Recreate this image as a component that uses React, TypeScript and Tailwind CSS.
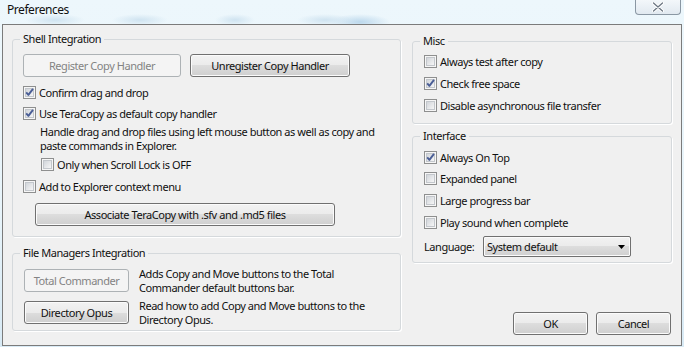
import React from "react";

function CheckIcon({ checked }: { checked?: boolean }) {
  return (
    <svg width="13" height="13" viewBox="0 0 13 13" className="shrink-0">
      <defs>
        <linearGradient id="cbin" x1="0" y1="0" x2="1" y2="1">
          <stop offset="0" stopColor="#cfd3d8" />
          <stop offset="1" stopColor="#f8f8f8" />
        </linearGradient>
      </defs>
      <rect x="0.5" y="0.5" width="12" height="12" fill="#f6f6f6" stroke="#8e8f8f" />
      <rect x="2.5" y="2.5" width="8" height="8" fill="url(#cbin)" stroke="#c3c7cc" />
      {checked && (
        <path
          d="M3.2 6.4 L5.4 8.9 L10 2.9"
          fill="none"
          stroke="#4a5e96"
          strokeWidth="1.9"
          strokeLinejoin="round"
        />
      )}
    </svg>
  );
}

function CheckRow({
  label,
  checked,
  className = "",
}: {
  label: string;
  checked?: boolean;
  className?: string;
}) {
  return (
    <div className={`flex h-[17px] items-center gap-[3px] ${className}`}>
      <CheckIcon checked={checked} />
      <span className="whitespace-nowrap">{label}</span>
    </div>
  );
}

function Btn({
  children,
  disabled,
  className = "",
}: {
  children: React.ReactNode;
  disabled?: boolean;
  className?: string;
}) {
  return (
    <div
      className={`flex h-[23px] shrink-0 items-center justify-center whitespace-nowrap rounded-[3px] border ${
        disabled
          ? "border-[#adb2b5] bg-[#f4f4f4] text-[#838383]"
          : "border-[#707070] bg-[linear-gradient(to_bottom,#f2f2f2_0%,#ebebeb_50%,#dddddd_50%,#cfcfcf_100%)] shadow-[inset_0_0_0_1px_#fbfbfb]"
      } ${className}`}
    >
      {children}
    </div>
  );
}

function Group({
  title,
  className = "",
  children,
}: {
  title: string;
  className?: string;
  children: React.ReactNode;
}) {
  return (
    <fieldset
      className={`flex flex-col rounded-[3px] border border-[#d5d9dc] shadow-[1px_1px_0_#ffffff] ${className}`}
    >
      <legend className="ml-[7px] px-[3px] leading-[14px]">{title}</legend>
      {children}
    </fieldset>
  );
}

export default function App() {
  return (
    <div className="h-[347px] w-[684px] overflow-hidden bg-[radial-gradient(ellipse_30px_6px_at_55px_20px,#cfe3f0,transparent),radial-gradient(ellipse_28px_6px_at_140px_20px,#cfe3f0,transparent),radial-gradient(ellipse_20px_6px_at_235px_20px,#cfe3f0,transparent),radial-gradient(ellipse_28px_6px_at_325px_20px,#cfe3f0,transparent),radial-gradient(ellipse_30px_8px_at_360px_22px,#bcd8ec,transparent),linear-gradient(to_bottom,#edf7fc,#e8f4fa_60%,#d8eaf5)] font-['Noto_Sans',sans-serif] text-[11px] leading-[14px] tracking-[-0.45px] text-[#111]">
      {/* Title bar */}
      <div className="flex h-[24px] items-start justify-between">
        <div className="pl-[7px] pt-[2px] text-[12px] leading-[16px]">Preferences</div>
        <div className="mr-[3px] flex h-[15px] w-[46px] items-center justify-center rounded-b-[4px] border border-t-0 border-[#8a97a3] bg-[linear-gradient(to_bottom,#f3f7fa,#e1e9f0)]">
          <svg width="12" height="10" viewBox="0 0 12 10">
            <path
              d="M1.5 1 L10.5 9 M10.5 1 L1.5 9"
              stroke="#ffffff"
              strokeWidth="3.2"
              strokeLinecap="round"
            />
            <path
              d="M1.5 1 L10.5 9 M10.5 1 L1.5 9"
              stroke="#6b7682"
              strokeWidth="1.3"
              strokeLinecap="round"
            />
          </svg>
        </div>
      </div>

      {/* Client area */}
      <div className="ml-[2px] flex h-[322px] w-[680px] gap-[11px] border border-[#7b7b7b] bg-[#f0f0f0] px-[9px]">
        {/* Left column */}
        <div className="flex w-[389px] flex-col">
          <Group title="Shell Integration" className="mt-[7px] pb-[10px]">
            <div className="ml-[10px] mt-[8px] flex gap-[9px]">
              <Btn disabled className="w-[158px]">
                Register Copy Handler
              </Btn>
              <Btn className="w-[160px]">Unregister Copy Handler</Btn>
            </div>
            <CheckRow className="ml-[10px] mt-[7px]" label="Confirm drag and drop" checked />
            <CheckRow
              className="ml-[10px] mt-[4px]"
              label="Use TeraCopy as default copy handler"
              checked
            />
            <div className="ml-[27px] mt-[3px] whitespace-nowrap">
              <div>Handle drag and drop files using left mouse button as well as copy and</div>
              <div>paste commands in Explorer.</div>
            </div>
            <CheckRow className="ml-[28px] mt-[3px]" label="Only when Scroll Lock is OFF" />
            <CheckRow className="ml-[10px] mt-[5px]" label="Add to Explorer context menu" />
            <Btn className="ml-[22px] mt-[8px] w-[300px]">
              Associate TeraCopy with .sfv and .md5 files
            </Btn>
          </Group>

          <Group title="File Managers Integration" className="mt-[9px] pb-[6px]">
            <div className="ml-[11px] mt-[9px] flex h-[23px] items-center gap-[10px]">
              <Btn disabled className="w-[105px]">
                Total Commander
              </Btn>
              <div className="whitespace-nowrap leading-[14px]">
                <div>Adds Copy and Move buttons to the Total</div>
                <div>Commander default buttons bar.</div>
              </div>
            </div>
            <div className="ml-[11px] mt-[9px] flex h-[23px] items-center gap-[10px]">
              <Btn className="w-[105px]">Directory Opus</Btn>
              <div className="whitespace-nowrap leading-[14px]">
                <div>Read how to add Copy and Move buttons to the</div>
                <div>Directory Opus.</div>
              </div>
            </div>
          </Group>
        </div>

        {/* Right column */}
        <div className="flex w-[260px] flex-col">
          <Group title="Misc" className="mt-[9px] pb-[9px]">
            <CheckRow className="ml-[11px] mt-[5px]" label="Always test after copy" />
            <CheckRow className="ml-[11px] mt-[5px]" label="Check free space" checked />
            <CheckRow
              className="ml-[11px] mt-[5px]"
              label="Disable asynchronous file transfer"
            />
          </Group>

          <Group title="Interface" className="mt-[5px] pb-[5px]">
            <CheckRow className="ml-[11px] mt-[6px]" label="Always On Top" checked />
            <CheckRow className="ml-[11px] mt-[4px]" label="Expanded panel" />
            <CheckRow className="ml-[11px] mt-[5px]" label="Large progress bar" />
            <CheckRow className="ml-[11px] mt-[5px]" label="Play sound when complete" />
            <div className="ml-[11px] mt-[5px] flex h-[21px] items-center gap-[9px]">
              <span className="w-[50px] whitespace-nowrap">Language:</span>
              <div className="flex h-[21px] w-[148px] items-center justify-between rounded-[2px] border border-[#707070] bg-[linear-gradient(to_bottom,#f2f2f2_0%,#ebebeb_50%,#dddddd_50%,#cfcfcf_100%)] pl-[3px] pr-[5px] shadow-[inset_0_0_0_1px_#fbfbfb]">
                <span>System default</span>
                <svg width="7" height="4" viewBox="0 0 7 4">
                  <path d="M0 0 L7 0 L3.5 4 Z" fill="#000" />
                </svg>
              </div>
            </div>
          </Group>

          <div className="mr-[1px] mt-[49px] flex justify-end gap-[8px]">
            <Btn className="w-[75px]">OK</Btn>
            <Btn className="w-[75px]">Cancel</Btn>
          </div>
        </div>
      </div>
    </div>
  );
}
